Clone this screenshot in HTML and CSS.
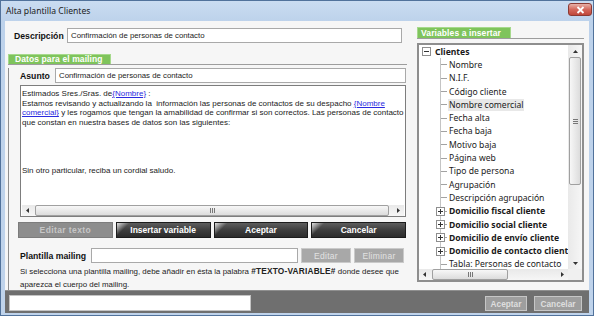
FILE: index.html
```html
<!DOCTYPE html>
<html lang="es">
<head>
    <meta charset="UTF-8">
    <title>Alta plantilla Clientes</title>
    <link rel="stylesheet" href="styles.css">
</head>
<body>
<div class="window">
    <div class="titlebar">
        <span class="title">Alta plantilla Clientes</span>
        <span class="close"><svg width="9" height="8" viewBox="0 0 9 8"><path d="M1.5 1 L7.5 7 M7.5 1 L1.5 7" stroke="#fff" stroke-width="1.8"/></svg></span>
    </div>
    <div class="client">
        <div class="main">
            <!-- columna izquierda -->
            <div class="left">
                <div class="field-row desc-row">
                    <span class="label desc-label">Descripción</span>
                    <div class="input">Confirmación de personas de contacto</div>
                </div>
                <div class="tabline"><span class="tab">Datos para el mailing</span></div>
                <div class="group">
                    <div class="field-row asunto-row">
                        <span class="label asunto-label">Asunto</span>
                        <div class="input">Confirmación de personas de contacto</div>
                    </div>
                    <div class="editor">
<div class="editor-text">Estimados Sres./Sras. de<a>{Nombre}</a> :
Estamos revisando y actualizando la  información las personas de contactos de su despacho <a>{Nombre
comercial}</a> y les rogamos que tengan la amabilidad de confirmar si son correctos. Las personas de contacto
que constan en nuestra bases de datos son las siguientes:




Sin otro particular, reciba un cordial saludo.</div>
                        <div class="hscroll editor-scroll">
                            <span class="arrow"><svg width="3" height="5" viewBox="0 0 3 5"><path d="M3 0 L0 2.5 L3 5z" fill="#333"/></svg></span>
                            <span class="track"><span class="thumb"><svg width="5" height="5" viewBox="0 0 5 5"><path d="M0.5 0v5M2.5 0v5M4.5 0v5" stroke="#777"/></svg></span></span>
                            <span class="arrow"><svg width="3" height="5" viewBox="0 0 3 5"><path d="M0 0 L3 2.5 L0 5z" fill="#333"/></svg></span>
                        </div>
                    </div>
                    <div class="actions">
                        <span class="btn btn-off">Editar texto</span>
                        <span class="btn">Insertar variable</span>
                        <span class="btn">Aceptar</span>
                        <span class="btn">Cancelar</span>
                    </div>
                    <div class="field-row plantilla-row">
                        <span class="label plantilla-label">Plantilla mailing</span>
                        <div class="input plantilla-input"></div>
                        <span class="mini-btn">Editar</span>
                        <span class="mini-btn">Eliminar</span>
                    </div>
                    <p class="help">Si selecciona una plantilla mailing, debe añadir en ésta la palabra <b>#TEXTO-VARIABLE#</b> donde desee que<br>aparezca el cuerpo del mailing.</p>
                </div>
            </div>

            <!-- columna derecha: variables -->
            <div class="right">
                <div class="tabline tabline-vars"><span class="tab tab-vars">Variables a insertar</span></div>
                <div class="tree">
                    <div class="tree-items">
                        <div class="node"><span class="twig"><svg width="9" height="9" viewBox="0 0 9 9"><rect x="0.5" y="0.5" width="8" height="8" fill="#fff" stroke="#8e8e8e"/><path d="M2 4.5h5" stroke="#333"/></svg></span><span class="text bold">Clientes</span></div>
                        <div class="node"><span class="twig"></span><span class="twig line"></span><span class="text">Nombre</span></div>
                        <div class="node"><span class="twig"></span><span class="twig line"></span><span class="text">N.I.F.</span></div>
                        <div class="node"><span class="twig"></span><span class="twig line"></span><span class="text">Código cliente</span></div>
                        <div class="node hl"><span class="twig"></span><span class="twig line"></span><span class="text">Nombre comercial</span></div>
                        <div class="node"><span class="twig"></span><span class="twig line"></span><span class="text">Fecha alta</span></div>
                        <div class="node"><span class="twig"></span><span class="twig line"></span><span class="text">Fecha baja</span></div>
                        <div class="node"><span class="twig"></span><span class="twig line"></span><span class="text">Motivo baja</span></div>
                        <div class="node"><span class="twig"></span><span class="twig line"></span><span class="text">Página web</span></div>
                        <div class="node"><span class="twig"></span><span class="twig line"></span><span class="text">Tipo de persona</span></div>
                        <div class="node"><span class="twig"></span><span class="twig line"></span><span class="text">Agrupación</span></div>
                        <div class="node"><span class="twig"></span><span class="twig line"></span><span class="text">Descripción agrupación</span></div>
                        <div class="node"><span class="twig"></span><span class="twig line"><svg width="9" height="9" viewBox="0 0 9 9"><rect x="0.5" y="0.5" width="8" height="8" fill="#fff" stroke="#8e8e8e"/><path d="M2 4.5h5M4.5 2v5" stroke="#333"/></svg></span><span class="text bold">Domicilio fiscal cliente</span></div>
                        <div class="node"><span class="twig"></span><span class="twig line"><svg width="9" height="9" viewBox="0 0 9 9"><rect x="0.5" y="0.5" width="8" height="8" fill="#fff" stroke="#8e8e8e"/><path d="M2 4.5h5M4.5 2v5" stroke="#333"/></svg></span><span class="text bold">Domicilio social cliente</span></div>
                        <div class="node"><span class="twig"></span><span class="twig line"><svg width="9" height="9" viewBox="0 0 9 9"><rect x="0.5" y="0.5" width="8" height="8" fill="#fff" stroke="#8e8e8e"/><path d="M2 4.5h5M4.5 2v5" stroke="#333"/></svg></span><span class="text bold">Domicilio de envío cliente</span></div>
                        <div class="node"><span class="twig"></span><span class="twig line"><svg width="9" height="9" viewBox="0 0 9 9"><rect x="0.5" y="0.5" width="8" height="8" fill="#fff" stroke="#8e8e8e"/><path d="M2 4.5h5M4.5 2v5" stroke="#333"/></svg></span><span class="text bold">Domicilio de contacto cliente</span></div>
                        <div class="node"><span class="twig"></span><span class="twig line"></span><span class="text">Tabla: Personas de contacto</span></div>
                    </div>
                    <div class="vscroll">
                        <span class="arrow"><svg width="5" height="3" viewBox="0 0 5 3"><path d="M0 3 L2.5 0 L5 3z" fill="#333"/></svg></span>
                        <span class="track"><span class="thumb"><svg width="5" height="5" viewBox="0 0 5 5"><path d="M0 0.5h5M0 2.5h5M0 4.5h5" stroke="#777"/></svg></span></span>
                        <span class="arrow"><svg width="5" height="3" viewBox="0 0 5 3"><path d="M0 0 L2.5 3 L5 0z" fill="#333"/></svg></span>
                    </div>
                    <div class="hscroll tree-scroll">
                        <span class="arrow"><svg width="3" height="5" viewBox="0 0 3 5"><path d="M3 0 L0 2.5 L3 5z" fill="#333"/></svg></span>
                        <span class="track"><span class="thumb"><svg width="5" height="5" viewBox="0 0 5 5"><path d="M0.5 0v5M2.5 0v5M4.5 0v5" stroke="#777"/></svg></span></span>
                        <span class="arrow"><svg width="3" height="5" viewBox="0 0 3 5"><path d="M0 0 L3 2.5 L0 5z" fill="#333"/></svg></span>
                    </div>
                    <div class="corner"></div>
                </div>
            </div>
        </div>
        <div class="footer">
            <div class="input footer-input"></div>
            <span class="foot-btn foot-first">Aceptar</span>
            <span class="foot-btn">Cancelar</span>
        </div>
    </div>
</div>
</body>
</html>
```
FILE: styles.css
```css
* {
    box-sizing: border-box;
}
body {
    margin: 0;
    background: #fff;
    font-family: "Liberation Sans", Arial, sans-serif;
    color: #1a1a1a;
}
.window {
    width: 594px;
    height: 316px;
    border: 1px solid #51729b;
    background: linear-gradient(#cadcf1, #bdd2eb 20px, #bfd3eb);
    display: flex;
    flex-direction: column;
}
.titlebar {
    height: 20px;
    flex: none;
    display: flex;
    align-items: center;
    justify-content: space-between;
    padding: 0 1px 0 5px;
}
.title {
    font-family: "Noto Sans", sans-serif;
    font-size: 8.6px;
    color: #1b1b1b;
}
.close {
    width: 24px;
    height: 13px;
    margin-top: -3px;
    border: 1px solid #8b3a33;
    border-radius: 3px;
    background: linear-gradient(#e7b1a8, #d4685c 50%, #c0473a);
    display: flex;
    align-items: center;
    justify-content: center;
}
.client {
    flex: 1;
    margin: 0 4px 2px;
    background: #f6f6f6;
    display: flex;
    flex-direction: column;
    min-height: 0;
}
.main {
    flex: 1;
    display: flex;
    gap: 10px;
    padding: 0 5px 0 3px;
    min-height: 0;
    overflow: hidden;
}
.left {
    width: 399px;
    flex: none;
}
.right {
    width: 167px;
    flex: none;
}

/* filas con etiqueta + campo */
.field-row {
    display: flex;
    align-items: center;
    height: 15px;
}
.label {
    font-weight: bold;
    font-size: 8.7px;
    color: #111;
    flex: none;
}
.input {
    flex: 1;
    height: 100%;
    background: #fff;
    border: 1px solid #a9a9a9;
    font-size: 7.8px;
    padding-left: 3px;
    display: flex;
    align-items: center;
    white-space: nowrap;
    overflow: hidden;
    color: #222;
}
.desc-row {
    margin-top: 7px;
    padding: 0 5px 0 6px;
}
.desc-label {
    width: 53px;
}

/* pestañas verdes */
.tabline {
    margin-top: 11px;
    height: 11px;
    border-bottom: 1px solid #9d9d9d;
    display: flex;
}
.tab {
    width: 103px;
    background: #7fc45c;
    border: 1px solid #a6d98c;
    border-bottom: none;
    color: #fff;
    font-weight: bold;
    font-size: 8.5px;
    line-height: 9px;
    padding-left: 6px;
    letter-spacing: 0.1px;
}
.tabline-vars {
    margin-top: 6px;
    height: 12px;
}
.tab-vars {
    width: 94px;
    padding-left: 3px;
    line-height: 10px;
}

.group {
    border-left: 1px solid #8e8e8e;
    padding: 0 1px 0 11px;
}
.asunto-row {
    margin-top: 3px;
}
.asunto-label {
    width: 35px;
}

/* editor de texto */
.editor {
    margin-top: 2px;
    height: 132px;
    border: 1px solid #7d7d7d;
    background: #fff;
    display: flex;
    flex-direction: column;
}
.editor-text {
    flex: 1;
    padding: 3px 0 0 1px;
    font-size: 8px;
    line-height: 9.6px;
    white-space: pre;
    overflow: hidden;
    color: #222;
}
.editor-text a {
    color: #2a2ae0;
    text-decoration: underline;
}

/* barras de desplazamiento */
.hscroll {
    display: flex;
    height: 11px;
    background: linear-gradient(#e9e9e9, #f6f6f6);
}
.editor-scroll {
    margin: 0 1px;
}
.arrow {
    width: 11px;
    flex: none;
    display: flex;
    align-items: center;
    justify-content: center;
}
.track {
    flex: 1;
    display: flex;
    min-width: 0;
    min-height: 0;
}
.thumb {
    background: linear-gradient(#f7f7f7, #dcdcdc);
    border: 1px solid #a0a0a0;
    border-radius: 2px;
    display: flex;
    align-items: center;
    justify-content: center;
}
.editor-scroll .thumb {
    flex: 1;
    margin: 0 4px 0 2px;
}
.tree-scroll .thumb {
    width: 76px;
    margin-left: 2px;
}
.vscroll {
    display: flex;
    flex-direction: column;
    background: linear-gradient(90deg, #e9e9e9, #f6f6f6);
}
.vscroll .arrow {
    width: auto;
    height: 12px;
}
.vscroll .track {
    flex-direction: column;
}
.vscroll .thumb {
    height: 128px;
    margin: 0 1px;
    background: linear-gradient(90deg, #f7f7f7, #dcdcdc);
}
.corner {
    background: #f0f0f0;
}

/* botones oscuros */
.actions {
    margin: 5px 0 0 -2px;
    height: 16px;
    display: grid;
    grid-template-columns: repeat(4, 1fr);
    gap: 3px;
}
.btn {
    background: linear-gradient(135deg, rgba(255,255,255,0.8) 0, rgba(255,255,255,0) 9px),
                linear-gradient(#5d5d5d, #3e3e3e 50%, #2c2c2c);
    border: 1px solid #1c1c1c;
    color: #fff;
    font-weight: bold;
    font-size: 8.5px;
    display: flex;
    align-items: center;
    justify-content: center;
}
.btn-off {
    background: #8d8d8d;
    border-color: #7c7c7c;
    color: #c6c6c6;
    letter-spacing: 0.4px;
}

.plantilla-row {
    margin-top: 10px;
}
.plantilla-label {
    width: 71px;
}
.plantilla-input {
    flex: none;
    width: 207px;
}
.mini-btn {
    width: 50px;
    height: 15px;
    margin-left: 3px;
    background: #a8a8a8;
    border: 1px solid #cacaca;
    color: #e2e2e2;
    font-size: 8.5px;
    letter-spacing: 0.3px;
    display: flex;
    align-items: center;
    justify-content: center;
}
.plantilla-row .mini-btn:first-of-type {
    margin-left: 4px;
}
.help {
    margin: 2px 0 0;
    font-size: 7.9px;
    line-height: 12.6px;
    color: #222;
    white-space: nowrap;
}
.help b {
    font-size: 8.3px;
    letter-spacing: 0.2px;
}

/* arbol de variables */
.tree {
    margin-top: 4px;
    height: 239px;
    border: 2px solid #8e8e8e;
    background: #fff;
    display: grid;
    grid-template-columns: 1fr 14px;
    grid-template-rows: 1fr 11px;
}
.tree-items {
    overflow: hidden;
    min-width: 0;
    min-height: 0;
    font-family: "Noto Sans", sans-serif;
    font-size: 8.6px;
    color: #1a1a1a;
}
.node {
    display: flex;
    align-items: center;
    height: 13.3px;
    white-space: nowrap;
}
.twig {
    width: 14px;
    height: 100%;
    flex: none;
    display: flex;
    align-items: center;
    justify-content: center;
}
.twig.line {
    background: linear-gradient(#c4c4c4, #c4c4c4) 7px 0 / 1px 100% no-repeat,
                linear-gradient(#a2a2a2, #a2a2a2) 7px 50% / 7px 1px no-repeat;
}
.text {
    margin-left: 1px;
    padding: 0 1px;
    line-height: 12px;
}
.hl .text {
    background: #e8e8e8;
}
.bold {
    font-weight: bold;
}

/* barra inferior */
.footer {
    height: 23px;
    flex: none;
    background: #6f6f6f;
    border-top: 1px solid #8f8f8f;
    display: flex;
    align-items: flex-end;
    padding: 0 7px 2px 4px;
    gap: 7px;
}
.footer-input {
    flex: none;
    width: 242px;
    height: 16px;
    border-color: #c4c4c4;
}
.foot-btn {
    height: 15px;
    padding: 0 3px;
    background: #9e9e9e;
    border: 1px solid #c6c6c6;
    color: #dedede;
    font-weight: bold;
    font-size: 8.3px;
    display: flex;
    align-items: center;
    justify-content: center;
}
.foot-first {
    margin-left: auto;
    width: 42px;
}
.foot-btn:last-child {
    width: 48px;
}
```
